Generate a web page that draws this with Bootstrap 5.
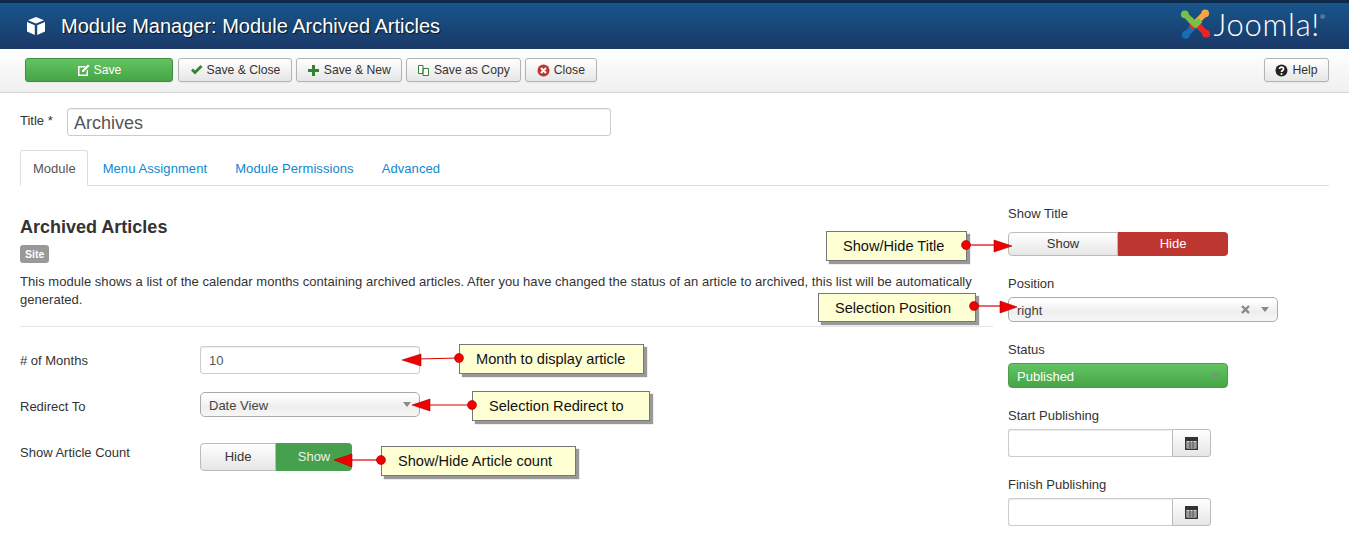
<!DOCTYPE html>
<html lang="en">
<head>
  <meta charset="UTF-8">
  <meta name="viewport" content="width=device-width, initial-scale=1.0">
  <title>Module Manager: Module Archived Articles</title>
  <link href="https://cdn.jsdelivr.net/npm/bootstrap@5.3.0/dist/css/bootstrap.min.css" rel="stylesheet">
  <style>
    html, body { height: 535px; overflow: hidden; }
    body {
      position: relative;
      font-family: "Liberation Sans", Arial, sans-serif;
      font-size: 13px;
      line-height: 18px;
      color: #333;
      background: #fff;
    }
    .top-head {
      height: 49px;
      padding: 0 24px 0 24px;
      border-top: 3px solid #0f2a4a;
      background: linear-gradient(#17568c, #1a3867);
    }
    .top-head h1 {
      margin: 0 0 0 13px;
      font-size: 20px;
      line-height: 46px;
      font-weight: 400;
      color: #fff;
      text-shadow: 1px 1px 1px rgba(0, 0, 0, .7);
    }
    .joomla-word {
      font-family: Lato, "Liberation Sans", sans-serif;
      font-size: 31px;
      font-weight: 300;
      letter-spacing: .7px;
      color: #fff;
      line-height: 34px;
      margin-left: 3px;
    }
    .joomla-word sup { font-size: 6px; top: -17px; letter-spacing: 0; }
    .tool-bar {
      height: 44px;
      padding: 9px 20px 0 25px;
      border-bottom: 1px solid #d4d4d4;
      background: linear-gradient(#fff, #f0f0f0);
    }
    .tool-btn {
      display: flex;
      align-items: center;
      justify-content: center;
      gap: 4px;
      height: 24px;
      padding: 0 10px;
      font-size: 12.2px;
      color: #333;
      border: 1px solid #b3b3b3;
      border-radius: 3px;
      background: linear-gradient(#fff, #e6e6e6);
      box-shadow: 0 1px 2px rgba(0, 0, 0, .05);
    }
    .tool-btn.go { width: 148px; margin-right: 1px; color: #fff; border-color: #3f8f42; background: linear-gradient(#62c462, #46a546); }
    .tool-btn.wide { padding: 0 10.5px; }
    .tool-btn.shut { padding: 0 11px; }
    .page-body { padding: 15px 20px 0; }
    .title-row { height: 42px; }
    .title-row label { width: 47px; padding-top: 4px; }
    .title-input {
      width: 544px;
      height: 28px;
      padding: 2px 6px 0;
      font-size: 18px;
      color: #555;
      border: 1px solid #ccc;
      border-radius: 3px;
      box-shadow: inset 0 1px 1px rgba(0, 0, 0, .075);
    }
    .jm-tabs { height: 36px; border-bottom: 1px solid #ddd; }
    .jm-tabs .nav-link {
      height: 36px;
      padding: 9px 12px 0;
      margin-right: 2px;
      font-size: 13px;
      line-height: 18px;
      letter-spacing: .08px;
      color: #0d88d1;
      border: 1px solid transparent;
      border-radius: 3px 3px 0 0;
    }
    .jm-tabs .nav-link.active { padding-right: 11px; letter-spacing: 0; color: #555; background: #fff; border-color: #ddd #ddd #fff; }
    .main-left { width: 973px; padding-top: 30px; }
    .main-left h2 { font-size: 18px; line-height: 22px; font-weight: 700; margin: 0 0 7px; color: #333; }
    .site-tag {
      display: inline-block;
      height: 18px;
      padding: 0 5px;
      font-size: 10.5px;
      font-weight: 700;
      line-height: 18px;
      color: #fff;
      background: #999;
      border-radius: 3px;
      vertical-align: top;
    }
    .intro { margin: 10px 0 0; line-height: 18px; letter-spacing: .035px; }
    .main-left hr { margin: 17px 0 0; border-color: #e5e5e5; opacity: 1; }
    .field-row { display: flex; align-items: flex-start; }
    .field-row > label { width: 180px; flex: none; padding-top: 6px; }
    .field-one { margin-top: 19px; }
    .field-two { margin-top: 18px; }
    .field-three { margin-top: 26px; }
    .field-three > label { padding-top: 1px; }
    .text-box {
      display: block;
      height: 28px;
      padding: 0 8px;
      font-size: 13px;
      color: #555;
      border: 1px solid #ccc;
      border-radius: 3px;
      background: #fff;
      box-shadow: inset 0 1px 1px rgba(0, 0, 0, .075);
    }
    .pick-box {
      display: flex;
      align-items: center;
      height: 25px;
      padding: 0 8px;
      color: #444;
      border: 1px solid #aaa;
      border-radius: 5px;
      background: linear-gradient(#fff 10%, #eee 60%, #f6f6f6);
    }
    .pick-box span { padding-top: 2px; }
    .caret-down { width: 0; height: 0; border: 4px solid transparent; border-top: 5px solid #888; border-bottom: 0; }
    .switch-pair { display: flex; height: 28px; }
    .switch-pair span {
      display: flex;
      align-items: center;
      justify-content: center;
      color: #333;
      border: 1px solid #bbb;
      background: linear-gradient(#fff, #e6e6e6);
    }
    .switch-pair span:first-child { border-radius: 4px 0 0 4px; }
    .switch-pair span:last-child { border-radius: 0 4px 4px 0; border: 0; color: #fff; }
    .switch-pair span.on-green { background: #47a04d; color: #e6f2e6; }
    .switch-pair span.on-red { background: #bd362f; }
    .side-col { margin-left: 15px; width: 321px; padding-top: 18px; }
    .side-col label { display: block; padding-top: 1px; margin-bottom: 4px; line-height: 18px; }
    .side-group { margin-bottom: 18px; }
    .side-group.first-group label { margin-bottom: 9px; }
    .green-pick { height: 25px; width: 220px; padding: 0 8px; color: #fff; border-radius: 4px; background: linear-gradient(#62c462, #46a546); border: 1px solid #4a9e4d; }
    .date-box { display: flex; width: 203px; height: 28px; }
    .date-box .text-box { width: 164px; border-radius: 3px 0 0 3px; border-right: 0; }
    .date-box button {
      width: 39px;
      padding: 0;
      border: 1px solid #bbb;
      border-radius: 0 3px 3px 0;
      background: linear-gradient(#fff, #e6e6e6);
      display: flex;
      align-items: center;
      justify-content: center;
    }
    .note-box {
      position: absolute;
      display: flex;
      align-items: center;
      height: 30px;
      padding-left: 16px;
      font-size: 14.6px;
      color: #111;
      background: #ffffd4;
      border: 1px solid #777;
      box-shadow: 3px 3px 1px #999;
    }
    .note-box.short { height: 29px; }
    .arrow-layer { position: absolute; left: 0; top: 0; pointer-events: none; }
  </style>
</head>
<body>

  <!-- Header -->
  <div class="top-head d-flex align-items-start justify-content-between">
    <div class="d-flex align-items-center">
      <svg width="24" height="22" viewBox="0 0 24 22"><path fill="#fff" d="M12 2l8 3.2L12 8.4 4 5.200zM3 7l7.800 3.200V20L3 16.500zM21 7l-7.800 3.200V20l7.800-3.500z"/></svg>
      <h1>Module Manager: Module Archived Articles</h1>
    </div>
    <div class="d-flex align-items-center pt-1">
      <svg width="31" height="32" viewBox="0 0 32 32" fill="none" stroke-width="6" stroke-linejoin="round">
        <path stroke="#1c6eb4" d="M6 27L17 16l5 5"/>
        <path stroke="#e8262a" d="M27 26L16 15l-5 5"/>
        <path stroke="#f9a541" d="M26 5L15 16l-5-5"/>
        <path stroke="#7ac143" d="M5 6l11 11 5-5"/>
        <circle cx="5" cy="6" r="4" fill="#7ac143" stroke="none"/>
        <circle cx="26" cy="5" r="4" fill="#f9a541" stroke="none"/>
        <circle cx="6" cy="27" r="4" fill="#1c6eb4" stroke="none"/>
        <circle cx="27" cy="26" r="4" fill="#e8262a" stroke="none"/>
      </svg>
      <span class="joomla-word">Joomla!<sup>®</sup></span>
    </div>
  </div>

  <!-- Toolbar -->
  <div class="tool-bar d-flex gap-1">
    <button class="tool-btn go">
      <svg width="13" height="13" viewBox="0 0 13 13"><path fill="#fff" d="M1 2h8L7.500 3.500H2.500v7h7V7L11 5.500V12H1zM11 .5L12.500 2 6.500 8H5V6.500z"/></svg>Save
    </button>
    <button class="tool-btn wide">
      <svg width="13" height="12" viewBox="0 0 13 12"><path fill="#378137" d="M1 6.500L3 4.500 5 6.500 10.500 1 12.500 3 5 10.500z"/></svg>Save &amp; Close
    </button>
    <button class="tool-btn">
      <svg width="13" height="13" viewBox="0 0 13 13"><path fill="#378137" d="M5 1h3v4h4v3H8v4H5V8H1V5h4z"/></svg>Save &amp; New
    </button>
    <button class="tool-btn">
      <svg width="13" height="13" viewBox="0 0 13 13" fill="#fff" stroke="#378137"><path d="M1.500 1.500h4.500v8h-4.500zM6 4.500h5.500v7H6z"/></svg>Save as Copy
    </button>
    <button class="tool-btn shut">
      <svg width="13" height="13" viewBox="0 0 13 13"><circle cx="6.500" cy="6.500" r="6" fill="#bd362f"/><path stroke="#fff" stroke-width="2" d="M4 4l5 5M9 4l-5 5"/></svg>Close
    </button>
    <button class="tool-btn wide ms-auto">
      <svg width="13" height="13" viewBox="0 0 13 13"><circle cx="6.500" cy="6.500" r="6" fill="#222"/><path fill="none" stroke="#fff" stroke-width="1.700" d="M4.500 5c0-2.500 4-2.500 4 0 0 1.500-2 1.500-2 3"/><circle cx="6.500" cy="10" r="1" fill="#fff"/></svg>Help
    </button>
  </div>

  <!-- Page -->
  <div class="page-body">
    <div class="title-row d-flex align-items-start">
      <label>Title *</label>
      <input class="title-input" type="text" value="Archives">
    </div>

    <ul class="nav jm-tabs">
      <li class="nav-item"><a class="nav-link active" href="#">Module</a></li>
      <li class="nav-item"><a class="nav-link" href="#">Menu Assignment</a></li>
      <li class="nav-item"><a class="nav-link" href="#">Module Permissions</a></li>
      <li class="nav-item"><a class="nav-link" href="#">Advanced</a></li>
    </ul>

    <div class="d-flex">
      <div class="main-left">
        <h2>Archived Articles</h2>
        <span class="site-tag">Site</span>
        <p class="intro">This module shows a list of the calendar months containing archived articles. After you have changed the status of an article to archived, this list will be automatically generated.</p>
        <hr>
        <div class="field-row field-one">
          <label>#&nbsp;of Months</label>
          <input class="text-box" style="width:220px" type="text" value="10">
        </div>
        <div class="field-row field-two">
          <label>Redirect To</label>
          <div class="pick-box justify-content-between" style="width:220px"><span>Date View</span><i class="caret-down"></i></div>
        </div>
        <div class="field-row field-three">
          <label>Show Article Count</label>
          <div class="switch-pair"><span style="width:76px">Hide</span><span class="on-green" style="width:76px">Show</span></div>
        </div>
      </div>

      <div class="side-col">
        <div class="side-group first-group">
          <label>Show Title</label>
          <div class="switch-pair" style="height:24px"><span style="width:110px">Show</span><span class="on-red" style="width:110px">Hide</span></div>
        </div>
        <div class="side-group">
          <label>Position</label>
          <div class="pick-box" style="width:270px"><span class="me-auto">right</span>
            <svg width="9" height="9" viewBox="0 0 9 9" style="margin-right:11px"><path stroke="#888" stroke-width="2.400" d="M1 1l7 7M8 1L1 8"/></svg><i class="caret-down"></i></div>
        </div>
        <div class="side-group">
          <label>Status</label>
          <div class="pick-box green-pick justify-content-between"><span>Published</span><i class="caret-down"></i></div>
        </div>
        <div class="side-group">
          <label>Start Publishing</label>
          <div class="date-box">
            <input class="text-box" type="text">
            <button type="button"><svg width="13" height="14" viewBox="0 0 13 14"><path fill="#333" d="M0 1h13v13H0z"/><path fill="#ddd" d="M1.500 5h10v7.500h-10z"/><path stroke="#555" d="M2 7h9M2 9h9M2 11h9M5 5v7M8 5v7"/></svg></button>
          </div>
        </div>
        <div class="side-group">
          <label>Finish Publishing</label>
          <div class="date-box">
            <input class="text-box" type="text">
            <button type="button"><svg width="13" height="14" viewBox="0 0 13 14"><path fill="#333" d="M0 1h13v13H0z"/><path fill="#ddd" d="M1.500 5h10v7.500h-10z"/><path stroke="#555" d="M2 7h9M2 9h9M2 11h9M5 5v7M8 5v7"/></svg></button>
          </div>
        </div>
      </div>
    </div>
  </div>

  <!-- Callouts -->
  <div class="note-box" style="left:826px;top:231px;width:141px">Show/Hide Title</div>
  <div class="note-box short" style="left:818px;top:293px;width:158px">Selection Position</div>
  <div class="note-box" style="left:459px;top:344px;width:185px">Month to display article</div>
  <div class="note-box" style="left:472px;top:391px;width:178px">Selection Redirect to</div>
  <div class="note-box" style="left:381px;top:446px;width:195px">Show/Hide Article count</div>

  <svg class="arrow-layer" width="1349" height="535" fill="#f00000" stroke="#a80000" stroke-width=".6">
    <line x1="966" y1="245" x2="998" y2="245" stroke="#e00000" stroke-width="1.200"/><polygon points="994,240 1012,246 994,252"/><circle cx="966" cy="245" r="4.500"/>
    <line x1="974" y1="306" x2="1003" y2="306" stroke="#e00000" stroke-width="1.200"/><polygon points="1000,301 1017,307 1000,313"/><circle cx="974" cy="306" r="4.500"/>
    <line x1="459" y1="358" x2="418" y2="359" stroke="#e00000" stroke-width="1.200"/><polygon points="421,354 402,360 421,366"/><circle cx="459" cy="358" r="4.500"/>
    <line x1="472" y1="405" x2="427" y2="405" stroke="#e00000" stroke-width="1.200"/><polygon points="430,399 412,405 430,411"/><circle cx="472" cy="405" r="4.500"/>
    <line x1="381" y1="460" x2="349" y2="460" stroke="#e00000" stroke-width="1.200"/><polygon points="352,454 334,460 352,467"/><circle cx="381" cy="460" r="4.500"/>
  </svg>

  <script src="https://cdn.jsdelivr.net/npm/bootstrap@5.3.0/dist/js/bootstrap.bundle.min.js"></script>
</body>
</html>
